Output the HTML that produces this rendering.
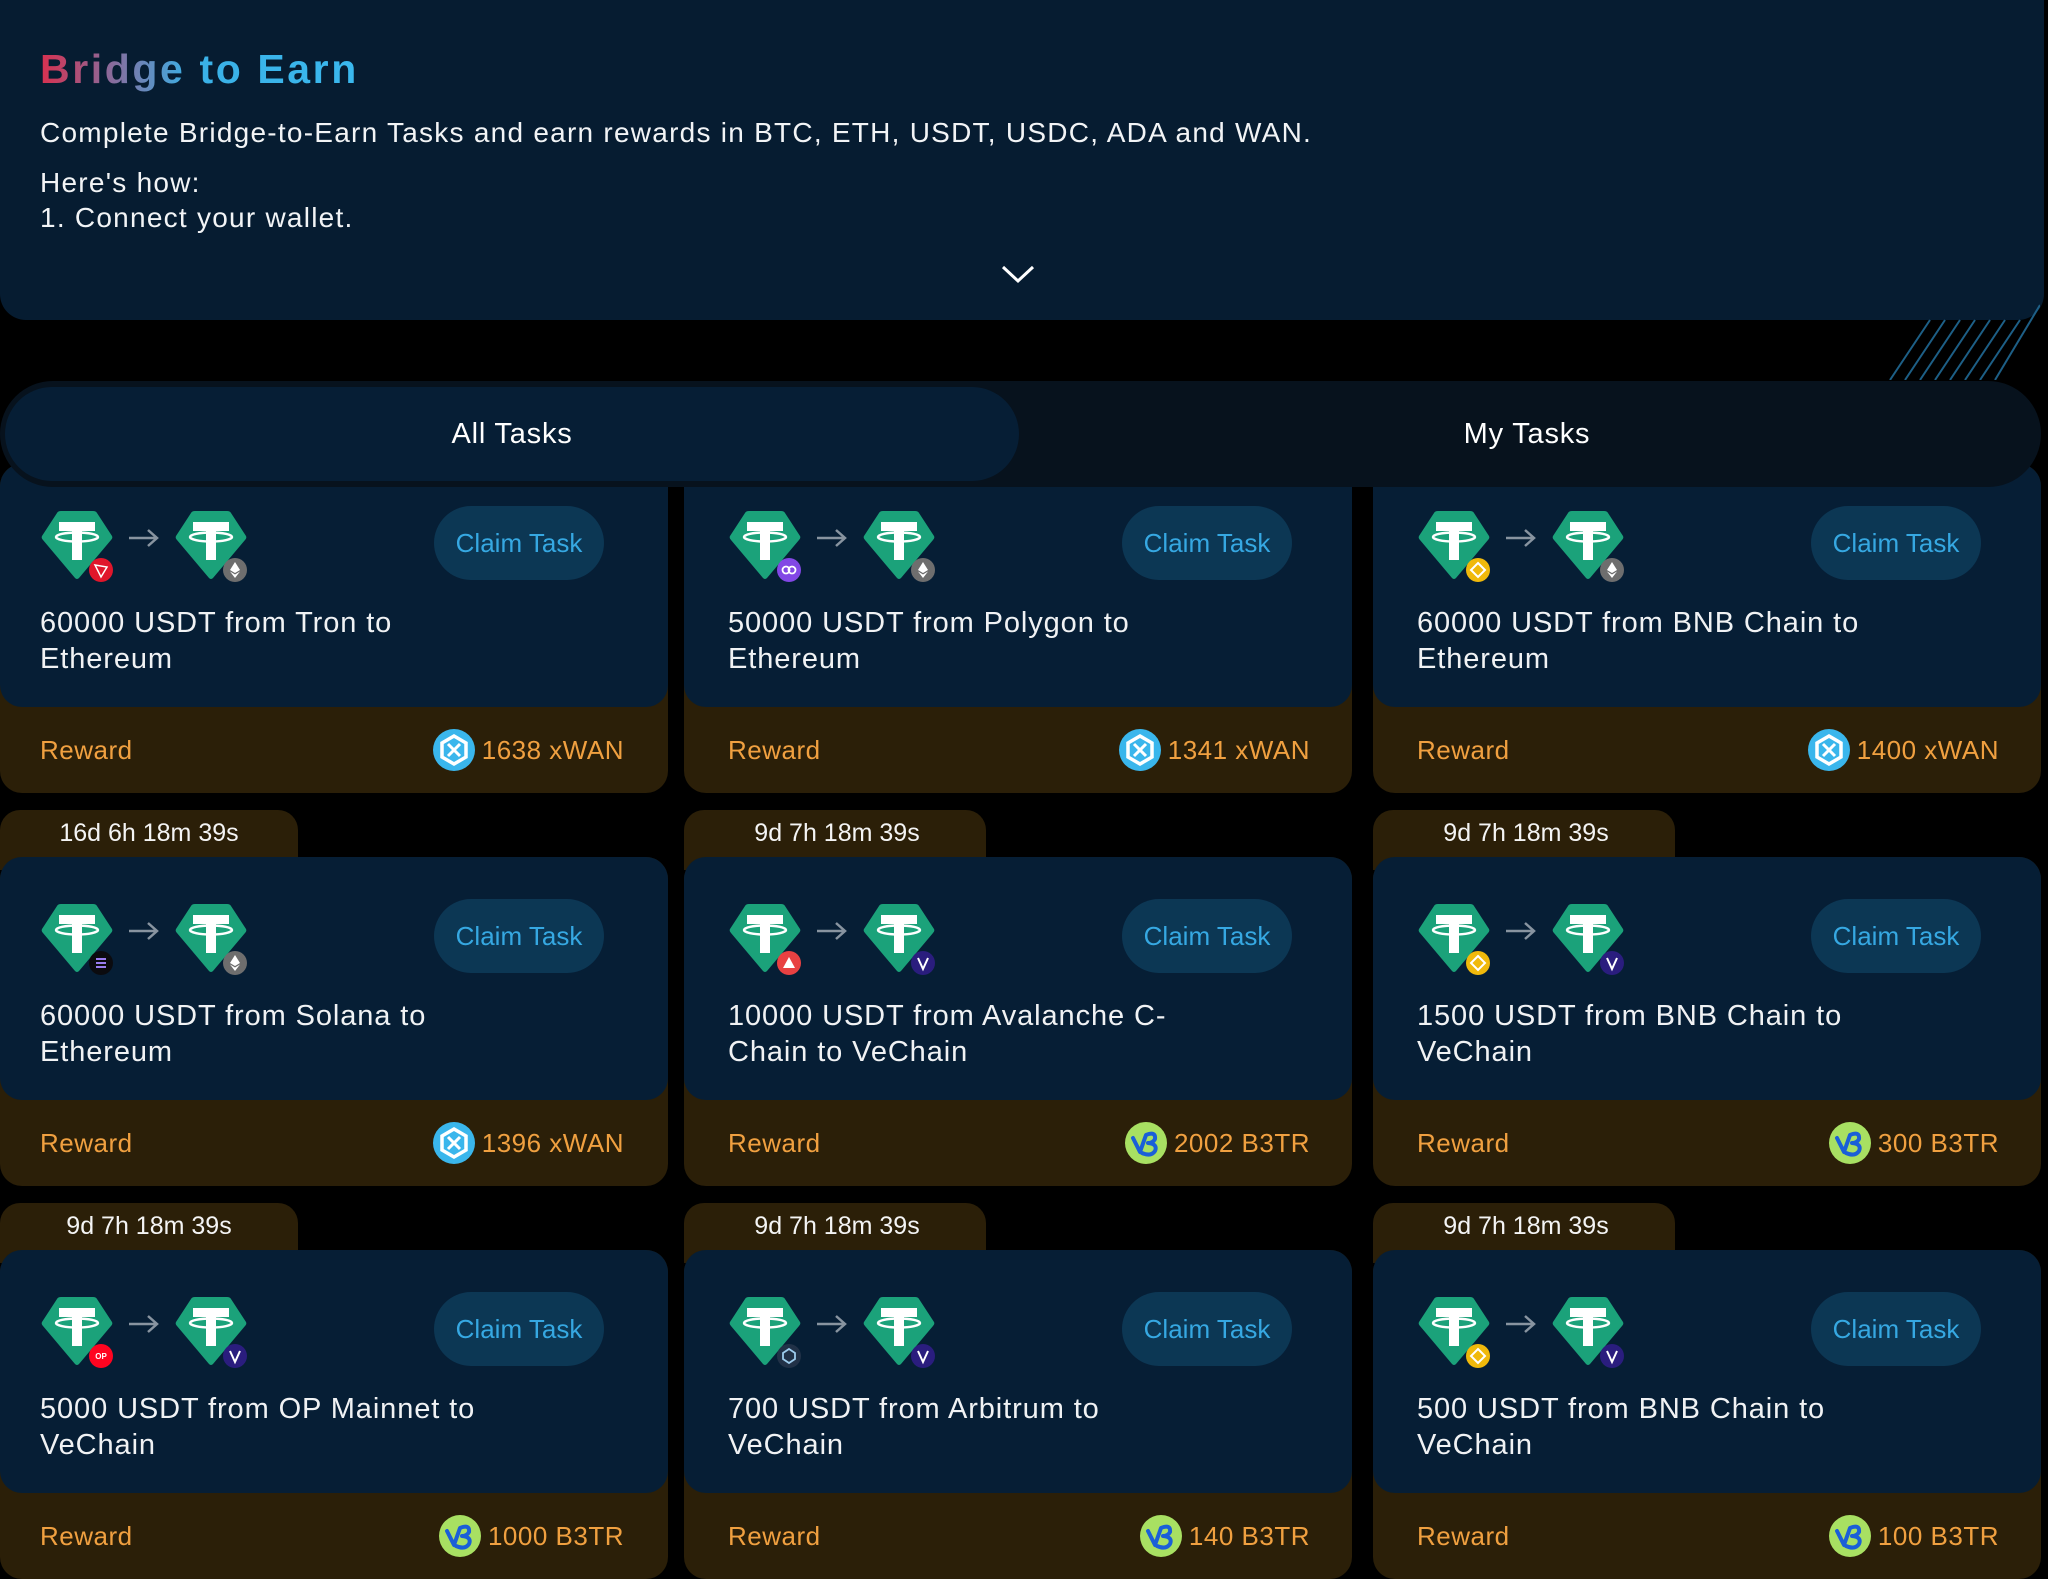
<!DOCTYPE html>
<html><head><meta charset="utf-8">
<style>
*{margin:0;padding:0;box-sizing:border-box}
html,body{width:2048px;height:1571px;overflow:hidden;background:#000;font-family:"Liberation Sans",sans-serif;color:#fff}
.hdr{position:absolute;left:0;top:0;width:2044px;height:320px;background:#061c31;border-radius:0 0 26px 26px}
.title{position:absolute;left:40px;top:46px;font-size:41px;font-weight:bold;letter-spacing:2.6px;background:linear-gradient(90deg,#d8304f 0,#8a6a9a 70px,#3ab0e6 150px,#3ab8ee 100%);-webkit-background-clip:text;background-clip:text;color:transparent}
.p{position:absolute;left:40px;font-size:28px;color:#f2f4f6;letter-spacing:1.25px}
.tabs{position:absolute;left:0;top:381px;width:2041px;height:106px;background:#07121d;border-radius:53px;z-index:5}
.tab{position:absolute;top:6px;height:94px;width:1014px;border-radius:47px;text-align:center;line-height:94px;font-size:29px;letter-spacing:0.8px}
.card{position:absolute;width:668px;height:329px;background:#2b1f08;border-radius:22px}
.top{position:absolute;left:0;top:0;width:668px;height:243px;background:#061e35;border-radius:22px}
.ic{position:absolute;top:46px;width:74px;height:76px}
.arr{position:absolute;left:127px;top:62px;width:34px;height:24px}
.btn{position:absolute;left:434px;top:42px;width:170px;height:74px;border-radius:37px;background:#0c3754;color:#36a8e2;font-size:26px;text-align:center;line-height:74px}
.txt{position:absolute;left:40px;top:141px;font-size:29px;line-height:36px;color:#f0f2f4;width:465px;letter-spacing:0.9px}
.rw{position:absolute;left:40px;top:271px;font-size:26px;color:#f0a040;letter-spacing:0.5px}
.rv{position:absolute;right:44px;top:266px;font-size:26px;color:#f0a040;display:flex;align-items:center;gap:6px;height:40px;letter-spacing:0.5px}
.rv svg{width:44px;height:44px}
.timer{position:absolute;width:298px;height:60px;background:#2b1f08;border-radius:20px 20px 0 0;text-align:center;font-size:25px;line-height:46px;color:#f4f4f4}
.bd{position:absolute;top:93px;width:26px;height:26px}
.b1{left:88px}.b2{left:222px}
.s .top > *, .s > .rw{transform:translateX(4px)}
.s > .rv{right:42px}
.ts{width:302px;padding-left:4px}
</style></head><body>
<svg width="0" height="0" style="position:absolute">
<defs>
<symbol id="usdt" viewBox="0 0 74 76">
<path d="M17 3 Q18 1 21 1 L53 1 Q56 1 57 3 L72 26 Q73 28 71 30 L39 68 Q37 70 35 68 L3 30 Q1 28 2 26 Z" fill="#1ba27a"/>
<rect x="19" y="12" width="36" height="9" fill="#fff"/>
<rect x="32" y="12" width="10" height="38" fill="#fff"/>
<ellipse cx="37" cy="27" rx="21" ry="4.5" fill="none" stroke="#fff" stroke-width="2.5"/>
</symbol>
<symbol id="wan" viewBox="0 0 44 44"><circle cx="22" cy="22" r="21" fill="#3ab6ec"/><path d="M22 8 L34 15 L34 29 L22 36 L10 29 L10 15Z" fill="none" stroke="#fff" stroke-width="3.5"/><path d="M16 16 L28 28 M28 16 L16 28" stroke="#fff" stroke-width="3"/></symbol>
<symbol id="b3" viewBox="0 0 44 44"><circle cx="22" cy="22" r="21" fill="#a8e062"/><path d="M9 17 L16 31 L22 14 Q32 10 31 18 Q29 22 24 22 Q34 23 31 30 Q27 36 18 32" fill="none" stroke="#1a5fd8" stroke-width="4" stroke-linecap="round" stroke-linejoin="round"/></symbol>
<symbol id="eth" viewBox="0 0 26 26"><circle cx="13" cy="13" r="12" fill="#6e6e6e"/><path d="M13 5 L18 13 L13 16 L8 13Z M8 14.5 L13 21 L18 14.5 L13 17.5Z" fill="#fff"/></symbol>
<symbol id="vet" viewBox="0 0 26 26"><circle cx="13" cy="13" r="12" fill="#2a1d7e"/><path d="M8 8 L13 19 L18 8" fill="none" stroke="#fff" stroke-width="2"/></symbol>
<symbol id="bnb" viewBox="0 0 26 26"><circle cx="13" cy="13" r="12" fill="#f0b90b"/><path d="M13 6 L20 13 L13 20 L6 13Z" fill="none" stroke="#fff" stroke-width="2"/></symbol>
<symbol id="arw" viewBox="0 0 34 24"><path d="M2 12 H30 M21 4 L30 12 L21 20" fill="none" stroke="#8894a0" stroke-width="2.5"/></symbol>
</defs></svg>

<div class="hdr">
<div class="title">Bridge to Earn</div>
<div class="p" style="top:117px">Complete Bridge-to-Earn Tasks and earn rewards in BTC, ETH, USDT, USDC, ADA and WAN.</div>
<div class="p" style="top:167px">Here's how:</div>
<div class="p" style="top:202px">1. Connect your wallet.</div>
<svg style="position:absolute;left:1001px;top:264px" width="34" height="20" viewBox="0 0 34 20"><path d="M2 3 L17 17 L32 3" fill="none" stroke="#fff" stroke-width="3"/></svg>
</div>
<svg style="position:absolute;left:1880px;top:300px" width="160" height="80"><g stroke="#1d5f86" stroke-width="2"><line x1="10" y1="80" x2="50" y2="20"/><line x1="25" y1="80" x2="65" y2="20"/><line x1="40" y1="80" x2="80" y2="20"/><line x1="55" y1="80" x2="95" y2="20"/><line x1="70" y1="80" x2="110" y2="20"/><line x1="85" y1="80" x2="125" y2="20"/><line x1="100" y1="80" x2="140" y2="20"/><line x1="115" y1="80" x2="160" y2="5"/></g></svg>

<div class="tabs">
<div class="tab" style="left:5px;background:#061e35">All Tasks</div>
<div class="tab" style="left:1020px">My Tasks</div>
</div>

<!-- Row 1 -->
<div class="card" style="left:0;top:464px"><div class="top">
<svg class="ic" style="left:40px"><use href="#usdt"/></svg><svg class="bd b1"><circle cx="13" cy="13" r="12" fill="#e0162b"/><path d="M7 8 L19 10 L13 20Z" fill="none" stroke="#fff" stroke-width="1.5"/></svg>
<svg class="arr"><use href="#arw"/></svg>
<svg class="ic" style="left:174px"><use href="#usdt"/></svg><svg class="bd b2"><use href="#eth"/></svg>
<div class="btn">Claim Task</div>
<div class="txt">60000 USDT from Tron to Ethereum</div></div>
<div class="rw">Reward</div><div class="rv"><svg><use href="#wan"/></svg>1638 xWAN</div></div>

<div class="card s" style="left:684px;top:464px"><div class="top">
<svg class="ic" style="left:40px"><use href="#usdt"/></svg><svg class="bd b1"><circle cx="13" cy="13" r="12" fill="#8247e5"/><circle cx="10" cy="13" r="3.5" fill="none" stroke="#fff" stroke-width="1.8"/><circle cx="16" cy="13" r="3.5" fill="none" stroke="#fff" stroke-width="1.8"/></svg>
<svg class="arr"><use href="#arw"/></svg>
<svg class="ic" style="left:174px"><use href="#usdt"/></svg><svg class="bd b2"><use href="#eth"/></svg>
<div class="btn">Claim Task</div>
<div class="txt">50000 USDT from Polygon to Ethereum</div></div>
<div class="rw">Reward</div><div class="rv"><svg><use href="#wan"/></svg>1341 xWAN</div></div>

<div class="card s" style="left:1373px;top:464px"><div class="top">
<svg class="ic" style="left:40px"><use href="#usdt"/></svg><svg class="bd b1"><use href="#bnb"/></svg>
<svg class="arr"><use href="#arw"/></svg>
<svg class="ic" style="left:174px"><use href="#usdt"/></svg><svg class="bd b2"><use href="#eth"/></svg>
<div class="btn">Claim Task</div>
<div class="txt">60000 USDT from BNB Chain to Ethereum</div></div>
<div class="rw">Reward</div><div class="rv"><svg><use href="#wan"/></svg>1400 xWAN</div></div>

<!-- Row 2 -->
<div class="timer" style="left:0;top:810px">16d 6h 18m 39s</div>
<div class="timer ts" style="left:684px;top:810px">9d 7h 18m 39s</div>
<div class="timer ts" style="left:1373px;top:810px">9d 7h 18m 39s</div>

<div class="card" style="left:0;top:857px"><div class="top">
<svg class="ic" style="left:40px"><use href="#usdt"/></svg><svg class="bd b1"><circle cx="13" cy="13" r="12" fill="#0b0b0f"/><path d="M8 9 H18 M8 13 H18 M8 17 H18" stroke="#9a7cf0" stroke-width="2"/></svg>
<svg class="arr"><use href="#arw"/></svg>
<svg class="ic" style="left:174px"><use href="#usdt"/></svg><svg class="bd b2"><use href="#eth"/></svg>
<div class="btn">Claim Task</div>
<div class="txt">60000 USDT from Solana to Ethereum</div></div>
<div class="rw">Reward</div><div class="rv"><svg><use href="#wan"/></svg>1396 xWAN</div></div>

<div class="card s" style="left:684px;top:857px"><div class="top">
<svg class="ic" style="left:40px"><use href="#usdt"/></svg><svg class="bd b1"><circle cx="13" cy="13" r="12" fill="#e84142"/><path d="M13 7 L19 18 H7Z" fill="#fff"/></svg>
<svg class="arr"><use href="#arw"/></svg>
<svg class="ic" style="left:174px"><use href="#usdt"/></svg><svg class="bd b2"><use href="#vet"/></svg>
<div class="btn">Claim Task</div>
<div class="txt">10000 USDT from Avalanche C-<br>Chain to VeChain</div></div>
<div class="rw">Reward</div><div class="rv"><svg><use href="#b3"/></svg>2002 B3TR</div></div>

<div class="card s" style="left:1373px;top:857px"><div class="top">
<svg class="ic" style="left:40px"><use href="#usdt"/></svg><svg class="bd b1"><use href="#bnb"/></svg>
<svg class="arr"><use href="#arw"/></svg>
<svg class="ic" style="left:174px"><use href="#usdt"/></svg><svg class="bd b2"><use href="#vet"/></svg>
<div class="btn">Claim Task</div>
<div class="txt">1500 USDT from BNB Chain to VeChain</div></div>
<div class="rw">Reward</div><div class="rv"><svg><use href="#b3"/></svg>300 B3TR</div></div>

<!-- Row 3 -->
<div class="timer" style="left:0;top:1203px">9d 7h 18m 39s</div>
<div class="timer ts" style="left:684px;top:1203px">9d 7h 18m 39s</div>
<div class="timer ts" style="left:1373px;top:1203px">9d 7h 18m 39s</div>

<div class="card" style="left:0;top:1250px"><div class="top">
<svg class="ic" style="left:40px"><use href="#usdt"/></svg><svg class="bd b1"><circle cx="13" cy="13" r="12" fill="#ff0420"/><text x="13" y="16" font-size="8" font-weight="bold" fill="#fff" text-anchor="middle" font-family="Liberation Sans">OP</text></svg>
<svg class="arr"><use href="#arw"/></svg>
<svg class="ic" style="left:174px"><use href="#usdt"/></svg><svg class="bd b2"><use href="#vet"/></svg>
<div class="btn">Claim Task</div>
<div class="txt">5000 USDT from OP Mainnet to VeChain</div></div>
<div class="rw">Reward</div><div class="rv"><svg><use href="#b3"/></svg>1000 B3TR</div></div>

<div class="card s" style="left:684px;top:1250px"><div class="top">
<svg class="ic" style="left:40px"><use href="#usdt"/></svg><svg class="bd b1"><circle cx="13" cy="13" r="12" fill="#213147"/><path d="M13 6 L19 10 L19 16 L13 20 L7 16 L7 10Z" fill="none" stroke="#9dcced" stroke-width="1.8"/></svg>
<svg class="arr"><use href="#arw"/></svg>
<svg class="ic" style="left:174px"><use href="#usdt"/></svg><svg class="bd b2"><use href="#vet"/></svg>
<div class="btn">Claim Task</div>
<div class="txt">700 USDT from Arbitrum to VeChain</div></div>
<div class="rw">Reward</div><div class="rv"><svg><use href="#b3"/></svg>140 B3TR</div></div>

<div class="card s" style="left:1373px;top:1250px"><div class="top">
<svg class="ic" style="left:40px"><use href="#usdt"/></svg><svg class="bd b1"><use href="#bnb"/></svg>
<svg class="arr"><use href="#arw"/></svg>
<svg class="ic" style="left:174px"><use href="#usdt"/></svg><svg class="bd b2"><use href="#vet"/></svg>
<div class="btn">Claim Task</div>
<div class="txt">500 USDT from BNB Chain to VeChain</div></div>
<div class="rw">Reward</div><div class="rv"><svg><use href="#b3"/></svg>100 B3TR</div></div>
</body></html>
